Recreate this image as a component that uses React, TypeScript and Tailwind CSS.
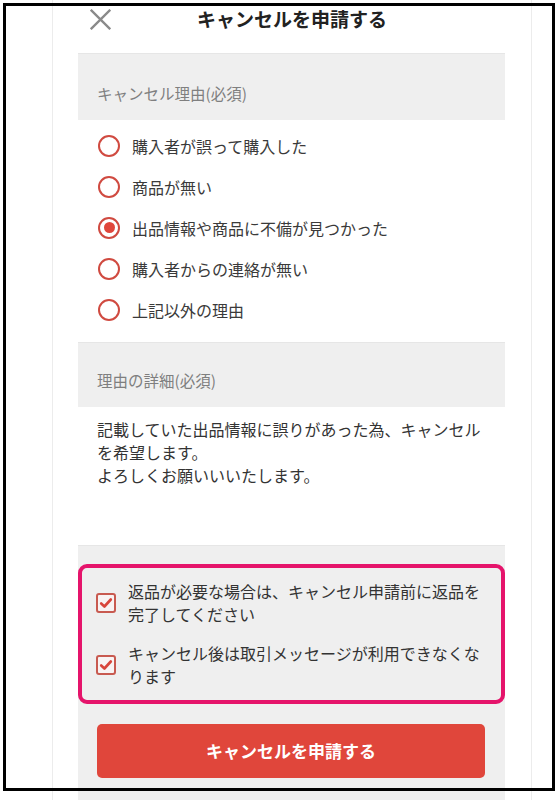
import React, { useState } from 'react';

const reasons = [
  '購入者が誤って購入した',
  '商品が無い',
  '出品情報や商品に不備が見つかった',
  '購入者からの連絡が無い',
  '上記以外の理由'
];

const notes = [
  '返品が必要な場合は、キャンセル申請前に返品を完了してください',
  'キャンセル後は取引メッセージが利用できなくなります'
];

const SectionHead = ({ label, h }: { label: string; h: string }) => (
  <div className={`${h} w-[427px] bg-[#efefef] border-t border-[#e6e6e6] flex items-end px-[19px] pb-[16px] text-[15.5px] leading-[22px] text-[#7f7f7f]`}>
    {label}
  </div>
);

const Radio = ({ checked }: { checked: boolean }) => (
  <span className="w-[22px] h-[22px] shrink-0 rounded-full border-[2.5px] border-[#d04a40] bg-white flex items-center justify-center">
    {checked && <span className="w-[11px] h-[11px] rounded-full bg-[#e0463b]" />}
  </span>
);

const CheckBox = () => (
  <span className="w-[20px] h-[20px] shrink-0 rounded-[3px] border-2 border-[#c85a50] bg-[#f8f3f3] flex items-center justify-center">
    <svg viewBox="0 0 16 16" className="w-[14px] h-[14px]">
      <path d="M2.5 8.5 L6.2 12 L13.5 4" fill="none" stroke="#d8453b" strokeWidth="3" strokeLinecap="round" strokeLinejoin="round" />
    </svg>
  </span>
);

export default function App() {
  const [selected, setSelected] = useState(2);
  return <div className="relative h-[800px] w-[559px] overflow-hidden bg-white font-['Noto_Sans_CJK_JP','Noto_Sans',sans-serif] text-[#333]">
      <div className="ml-[52px] w-[480px] min-h-[820px] border-x border-[#ececec]">
        <div className="h-[38px] mb-[15px] grid grid-cols-[1fr_auto_1fr] items-center">
          <div className="pl-[37px] flex items-center">
            <svg viewBox="0 0 20 20" className="w-[21px] h-[21px]">
              <path d="M1.5 1.5 L18.5 18.5 M18.5 1.5 L1.5 18.5" stroke="#8a8a8a" strokeWidth="2.2" strokeLinecap="square" />
            </svg>
          </div>
          <h1 className="text-[19px] font-bold text-[#222] leading-[26px]">キャンセルを申請する</h1>
          <div />
        </div>

        <div className="pl-[25px]">
          <SectionHead label="キャンセル理由(必須)" h="h-[67px]" />
          <ul className="w-[427px] px-[20px] pt-[5px] pb-[12px]">
            {reasons.map((r, i) => <li key={r} onClick={() => setSelected(i)} className="h-[41px] flex items-center gap-[12px] text-[16px] text-[#3a3a3a] cursor-pointer">
                <Radio checked={selected === i} />
                <span>{r}</span>
              </li>)}
          </ul>

          <SectionHead label="理由の詳細(必須)" h="h-[65px]" />
          <div className="w-[427px] h-[138px] px-[19px] pt-[11px] text-[16px] leading-[23px] text-[#333]">
            記載していた出品情報に誤りがあった為、キャンセルを希望します。
            <br />
            よろしくお願いいいたします。
          </div>

          <div className="w-[427px] bg-[#efefef] pt-[18px] pb-[60px] border-t border-[#e6e6e6]">
            <div className="rounded-[9px] border-4 border-[#e5146b] pt-[12px] pb-[12px] pl-[14px] pr-[16px] flex flex-col gap-[16px]">
              {notes.map(n => <label key={n} className="flex items-center gap-[12px]">
                  <CheckBox />
                  <span className="text-[16px] leading-[23px] text-[#333]">{n}</span>
                </label>)}
            </div>
            <button type="button" className="mt-[20px] ml-[19px] w-[388px] h-[54px] rounded-[5px] bg-[#e0463b] text-white text-[17px] font-bold">
              キャンセルを申請する
            </button>
          </div>
        </div>
      </div>

      <div className="pointer-events-none absolute left-[3px] top-[3px] w-[552px] h-[788px] border-[3px] border-black" />
    </div>;
}
